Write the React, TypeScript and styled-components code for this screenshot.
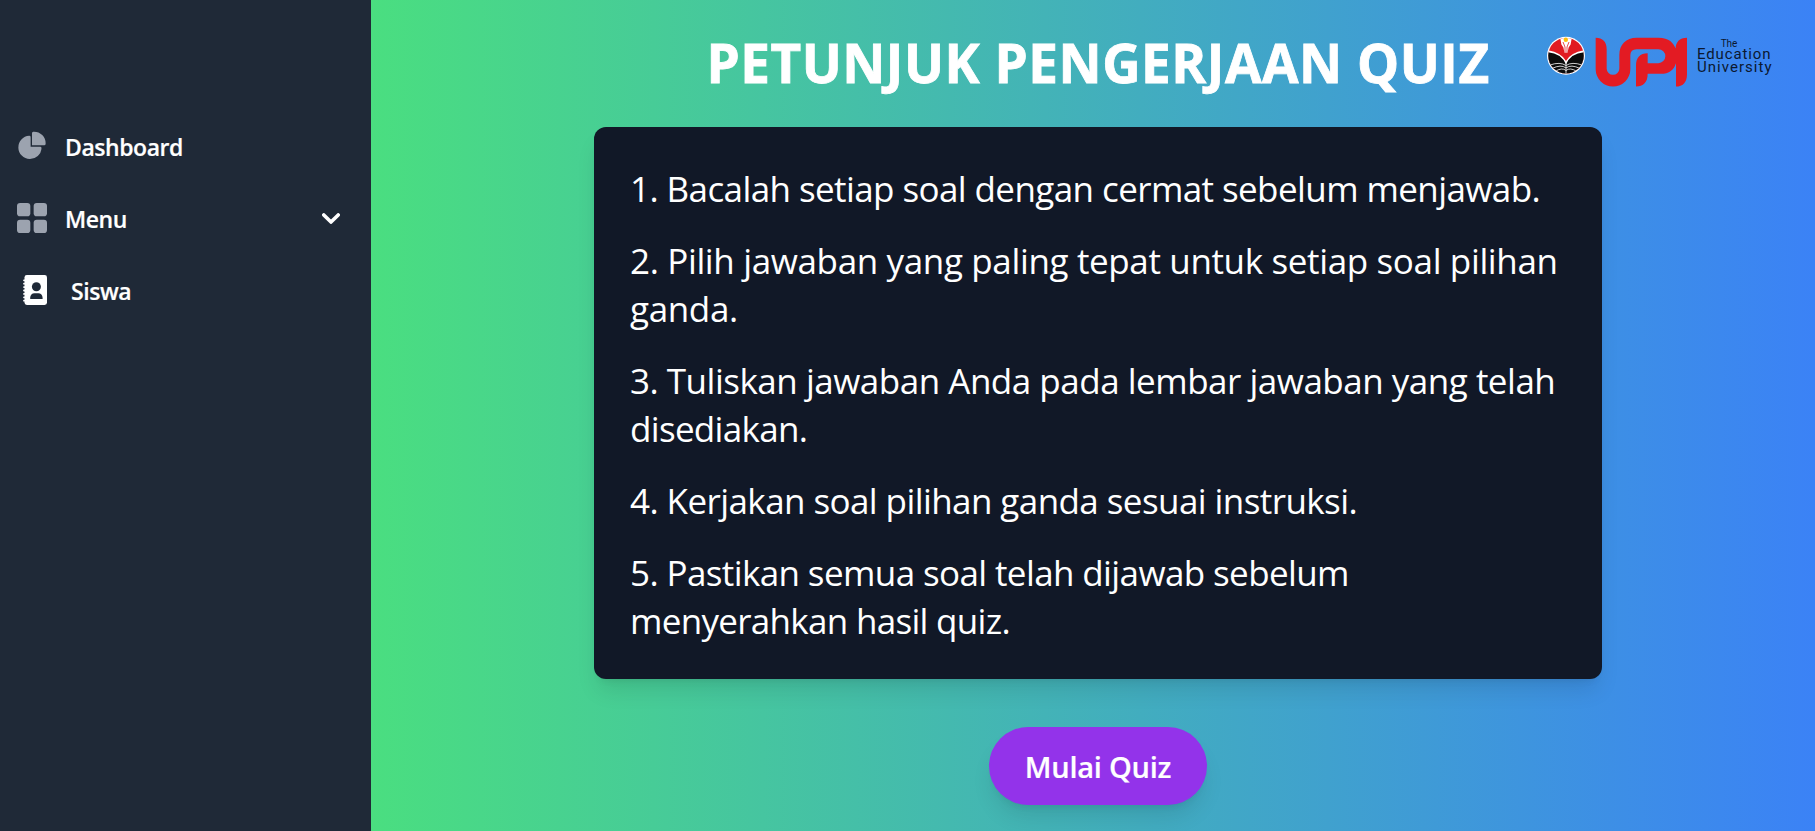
import React from "react";
import styled, { createGlobalStyle } from "styled-components";

const Global = createGlobalStyle`
  *, *::before, *::after { box-sizing: border-box; }
  body { margin: 0; font-family: "Open Sans", "Noto Sans", sans-serif; color: #fff; overflow: hidden; }
  h1, ol, li { margin: 0; padding: 0; }
`;

const Page = styled.div`
  display: flex;
  height: 831px;
`;

const Sidebar = styled.aside`
  width: 371px;
  flex: none;
  background: #1f2937;
  padding: 116px 18px 0 5px;
`;

const NavList = styled.nav`
  display: flex;
  flex-direction: column;
  gap: 12px;
`;

const NavItem = styled.a<{ $inset?: number }>`
  display: flex;
  align-items: center;
  height: 60px;
  padding: 0 12px;
  gap: ${(p) => 18 + (p.$inset ?? 0)}px;
  font-size: 23px;
  line-height: 36px;
  font-weight: 600;
`;

const NavLabel = styled.span`
  flex: 1;
  padding-top: 1px;
  letter-spacing: -0.45px;
  -webkit-text-stroke: 0.2px #fff;
`;

const NavIcon = styled.svg`
  width: 30px;
  height: 30px;
  flex: none;
  fill: #9ca3af;
`;

const Chevron = styled.svg`
  width: 18px;
  height: 11px;
  margin-right: 1px;
`;

const Main = styled.main`
  flex: 1;
  position: relative;
  display: flex;
  flex-direction: column;
  align-items: center;
  padding: 27px 0 0 10px;
  background: linear-gradient(to right, #4ade80, #3b82f6);
`;

const Title = styled.h1`
  font-size: 53px;
  line-height: 72px;
  font-weight: 700;
  letter-spacing: 0.53px;
  white-space: nowrap;
  -webkit-text-stroke: 0.8px #fff;
`;

const Card = styled.ol`
  width: 1008px;
  margin-top: 28px;
  padding: 38px 36px 34px;
  display: flex;
  flex-direction: column;
  gap: 24px;
  list-style: none;
  border-radius: 12px;
  background: #111827;
  box-shadow: 0 15px 22px -4px rgba(0, 0, 0, 0.1), 0 6px 9px -6px rgba(0, 0, 0, 0.1);
`;

const Step = styled.li`
  font-size: 35px;
  line-height: 48px;
`;

const StepLine = styled.span<{ $spacing: number }>`
  display: block;
  white-space: nowrap;
  letter-spacing: ${(p) => p.$spacing}px;
`;

const StartButton = styled.button`
  width: 218px;
  height: 78px;
  margin-top: 48px;
  padding: 2px 0 0;
  border: 0;
  border-radius: 39px;
  background: #9333ea;
  color: #fff;
  font: 600 29px/42px "Open Sans", "Noto Sans", sans-serif;
  letter-spacing: -0.25px;
  white-space: nowrap;
  -webkit-text-stroke: 0.2px #fff;
  box-shadow: 0 15px 22px -4px rgba(0, 0, 0, 0.1), 0 6px 9px -6px rgba(0, 0, 0, 0.1);
`;

const Brand = styled.div`
  position: absolute;
  top: 35px;
  right: 42px;
  width: 227px;
  height: 53px;
`;

const BrandText = styled.text`
  font-family: Roboto, "Liberation Sans", sans-serif;
  fill: #0b1830;
`;

type Line = { text: string; spacing: number };

const steps: Line[][] = [
  [{ text: "1. Bacalah setiap soal dengan cermat sebelum menjawab.", spacing: -0.59 }],
  [
    { text: "2. Pilih jawaban yang paling tepat untuk setiap soal pilihan", spacing: -0.36 },
    { text: "ganda.", spacing: -0.35 },
  ],
  [
    { text: "3. Tuliskan jawaban Anda pada lembar jawaban yang telah", spacing: -0.49 },
    { text: "disediakan.", spacing: -0.68 },
  ],
  [{ text: "4. Kerjakan soal pilihan ganda sesuai instruksi.", spacing: -0.58 }],
  [
    { text: "5. Pastikan semua soal telah dijawab sebelum", spacing: -0.61 },
    { text: "menyerahkan hasil quiz.", spacing: -0.7 },
  ],
];

function BrandLogo() {
  return (
    <Brand>
      <svg width="227" height="53" viewBox="0 0 227 53">
        <clipPath id="seal">
          <circle cx="20" cy="20.7" r="17.8" />
        </clipPath>
        <circle cx="20" cy="20.7" r="19" fill="#fff" />
        <g clipPath="url(#seal)">
          <rect width="40" height="40" fill="#e11b22" />
          <path d="M14 1.5H26L24.6 9.5L22.6 12.5L21.6 17.5H18.4L17.4 12.5L15.4 9.5Z" fill="#fff" />
          <path d="M17 7L19 12V17M23 7L21 12V17" stroke="#e11b22" strokeWidth="0.8" fill="none" />
          <path d="M0 15Q15 17 20 26Q25 17 40 15V40H0Z" fill="#fff" />
          <path d="M0 17.2Q15 17.5 20 29.5Q25 17.5 40 17.2V40H0Z" fill="#0c0c0c" />
          <g fill="none" stroke="#fff" strokeWidth="0.8">
            <path d="M4 30Q14 26.5 20 30.5Q26 26.5 36 30" />
            <path d="M6 33.5Q15 29 20 33Q25 29 34 33.5" />
            <path d="M9 36.5Q16 32 20 35.5Q24 32 31 36.5" />
            <path d="M20 28V39" />
          </g>
        </g>
        <circle cx="19.8" cy="4.7" r="2.2" fill="#fdc010" />
        <path
          transform="translate(44 -2.5) scale(0.33333)"
          fill="#e31b23"
          d="M17 16C38 16 50 28 50 50V108A19 19 0 0 0 88 108V68C88 36 108 16 140 16H205C238 16 250 32 257 48C257 30 268 16 291 16V125C291 150 278 162 258 162V92C252 112 238 124 212 124H173C173 150 160 162 138 162V98C138 76 150 62 173 62V92H205A21 21 0 0 0 205 50H140Q121 50 121 68V110A52 52 0 0 1 17 110Z"
        />
        <BrandText x="174.8" y="12.3" fontSize="10" textLength="16.5">The</BrandText>
        <BrandText x="151" y="24" fontSize="15" textLength="73.5">Education</BrandText>
        <BrandText x="151" y="37.2" fontSize="15" textLength="74.5">University</BrandText>
      </svg>
    </Brand>
  );
}

export default function App() {
  return (
    <Page>
      <Global />
      <Sidebar>
        <NavList>
          <NavItem>
            <NavIcon viewBox="0 0 22 21">
              <path d="M16.975 11H10V4.025a1 1 0 0 0-1.066-.998 8.5 8.5 0 1 0 9.039 9.039.999.999 0 0 0-1-1.066h.002Z" />
              <path d="M12.5 0c-.157 0-.311.01-.565.027A1 1 0 0 0 11 1.02V10h8.975a1 1 0 0 0 1-.935c.013-.188.028-.374.028-.565A8.51 8.51 0 0 0 12.5 0Z" />
            </NavIcon>
            <NavLabel>Dashboard</NavLabel>
          </NavItem>
          <NavItem>
            <NavIcon viewBox="0 0 18 18">
              <rect width="8" height="8" rx="1.857" />
              <rect x="10" width="8" height="8" rx="1.857" />
              <rect y="10" width="8" height="8" rx="1.857" />
              <rect x="10" y="10" width="8" height="8" rx="1.857" />
            </NavIcon>
            <NavLabel>Menu</NavLabel>
            <Chevron viewBox="0 0 10 6">
              <path d="m1 1 4 4 4-4" fill="none" stroke="#fff" strokeWidth="2" strokeLinecap="round" strokeLinejoin="round" />
            </Chevron>
          </NavItem>
          <NavItem $inset={6}>
            <NavIcon viewBox="0 0 30 30">
              <rect x="7.5" width="22.5" height="30" rx="2.4" fill="#fff" />
              <path d="M7 5.3H9M7 8.7H9M7 12.1H9M7 15.5H9M7 18.9H9M7 22.3H9M7 25.7H9" stroke="#fff" strokeWidth="1.8" strokeLinecap="round" />
              <circle cx="19.4" cy="11.7" r="4.5" fill="#1f2937" />
              <path d="M13.2 24V22.8C13.2 20 15 18.2 17.5 18.2H21.3C23.8 18.2 25.6 20 25.6 22.8V24Z" fill="#1f2937" />
            </NavIcon>
            <NavLabel>Siswa</NavLabel>
          </NavItem>
        </NavList>
      </Sidebar>
      <Main>
        <Title>PETUNJUK PENGERJAAN QUIZ</Title>
        <BrandLogo />
        <Card>
          {steps.map((lines) => (
            <Step key={lines[0].text}>
              {lines.map((line) => (
                <StepLine key={line.text} $spacing={line.spacing}>
                  {line.text}
                </StepLine>
              ))}
            </Step>
          ))}
        </Card>
        <StartButton>Mulai Quiz</StartButton>
      </Main>
    </Page>
  );
}
